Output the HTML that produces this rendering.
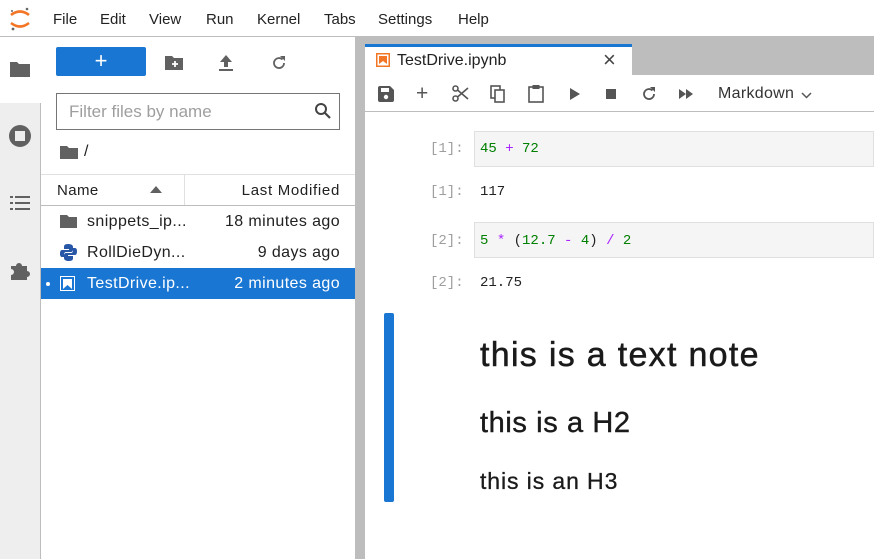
<!DOCTYPE html>
<html><head><meta charset="utf-8"><style>
*{box-sizing:border-box;margin:0;padding:0}
body{width:874px;height:559px;overflow:hidden;background:#fff;font-family:"Liberation Sans",sans-serif;color:#212121;position:relative;font-size:15px}
.a{position:absolute}
.mono{font-family:"Liberation Mono",monospace;font-size:14px}
.menu span{position:absolute;top:11px;font-size:15px;color:#222}
.ls{letter-spacing:0.4px}
</style></head><body>
<div class="a" style="left:0;top:0;width:874px;height:37px;border-bottom:1px solid #bdbdbd;background:#fff"></div>
<svg class="a" style="left:8px;top:6px" width="24" height="26" viewBox="0 0 24 26">
<path d="M3 9 Q12 2 21 9" stroke="#f37626" stroke-width="2.6" fill="none"/>
<path d="M3 17 Q12 24 21 17" stroke="#f37626" stroke-width="2.6" fill="none"/>
<circle cx="19" cy="3" r="1.3" fill="#666"/><circle cx="4" cy="5" r="1" fill="#666"/><circle cx="5" cy="23" r="1.4" fill="#666"/>
</svg>
<div class="menu">
<span style="left:53px">File</span><span style="left:100px">Edit</span><span style="left:149px">View</span><span style="left:206px">Run</span><span style="left:257px">Kernel</span><span style="left:324px">Tabs</span><span style="left:378px">Settings</span><span style="left:458px">Help</span>
</div>
<div class="a" style="left:0;top:37px;width:41px;height:522px;background:#eeeeee;border-right:1px solid #bdbdbd"></div>
<div class="a" style="left:0;top:37px;width:41px;height:66px;background:#fff"></div>
<svg class="a" style="left:9px;top:60px" width="22" height="18" viewBox="0 0 22 18"><path d="M1 2h7l2 2h11v13H1z" fill="#616161"/></svg>
<svg class="a" style="left:8px;top:124px" width="24" height="24"><circle cx="12" cy="12" r="11" fill="#616161"/><rect x="7" y="7" width="10" height="10" fill="#eee"/></svg>
<svg class="a" style="left:10px;top:195px" width="20" height="16"><g fill="#616161"><rect x="0" y="1" width="3" height="2"/><rect x="5" y="1" width="15" height="2"/><rect x="0" y="7" width="3" height="2"/><rect x="5" y="7" width="15" height="2"/><rect x="0" y="13" width="3" height="2"/><rect x="5" y="13" width="15" height="2"/></g></svg>
<svg class="a" style="left:9px;top:259px" width="22" height="22" viewBox="0 0 22 22"><path d="M2 7h5a3 3 0 1 1 6 0h5v5a3 3 0 1 1 0 6v3H2v-5a3 3 0 1 0 0-6z" fill="#616161"/></svg>
<div class="a" style="left:56px;top:47px;width:90px;height:29px;background:#1976d2;border-radius:2px;color:#fff;text-align:center;font-size:22px;line-height:28px">+</div>
<svg class="a" style="left:165px;top:55px" width="18" height="15" viewBox="0 0 18 15"><path d="M0 1h7l2 2h9v12H0z" fill="#616161"/><path d="M10 6v6M7 9h6" stroke="#fff" stroke-width="1.8"/></svg>
<svg class="a" style="left:219px;top:55px" width="14" height="16"><path d="M7 0L1 7h4v5h4V7h4z M0 14h14v2H0z" fill="#616161"/></svg>
<svg class="a" style="left:271px;top:55px" width="16" height="16" viewBox="0 0 16 16"><path d="M13 8a5 5 0 1 1-1.5-3.5" stroke="#616161" stroke-width="1.8" fill="none"/><path d="M9 1h5v5z" fill="#616161"/></svg>
<div class="a" style="left:56px;top:93px;width:284px;height:37px;border:1px solid #757575;color:#9e9e9e;font-size:17px;padding:8px 12px">Filter files by name</div>
<svg class="a" style="left:314px;top:102px" width="18" height="18"><circle cx="7" cy="7" r="5" stroke="#444" stroke-width="2" fill="none"/><path d="M11 11l5 5" stroke="#444" stroke-width="2.2"/></svg>
<svg class="a" style="left:60px;top:145px" width="18" height="14"><path d="M0 1h7l2 2h9v11H0z" fill="#616161"/></svg>
<div class="a" style="left:84px;top:143px;font-size:16px">/</div>
<div class="a" style="left:41px;top:174px;width:314px;height:32px;border-top:1px solid #e0e0e0;border-bottom:1px solid #bdbdbd"></div>
<div class="a" style="left:184px;top:175px;width:1px;height:30px;background:#e0e0e0"></div>
<div class="a ls" style="left:57px;top:182px;font-size:15px">Name</div>
<svg class="a" style="left:150px;top:186px" width="12" height="7"><path d="M0 7L6 0l6 7z" fill="#616161"/></svg>
<div class="a ls" style="right:534px;top:182px;font-size:15px;letter-spacing:0.7px">Last Modified</div>
<svg class="a" style="left:60px;top:214px" width="17" height="14"><path d="M0 1h7l2 2h8v11H0z" fill="#616161"/></svg>
<div class="a ls" style="left:87px;top:213px;font-size:16px">snippets_ip...</div>
<div class="a ls" style="right:534px;top:213px;font-size:16px">18 minutes ago</div>
<svg class="a" style="left:60px;top:244px" width="17" height="17" viewBox="0 0 17 17"><path d="M8 0C4 0 4 2 4 3v2h5v1H2C0 6 0 9 0 10c0 2 1 3 2 3h2v-3c0-1 1-2 2-2h5c1 0 2-1 2-2V3c0-2-2-3-5-3z" fill="#2856a6"/><path d="M9 17c4 0 4-2 4-3v-2H8v-1h7c2 0 2-3 2-4 0-2-1-3-2-3h-2v3c0 1-1 2-2 2H6c-1 0-2 1-2 2v3c0 2 2 3 5 3z" fill="#2856a6"/></svg>
<div class="a ls" style="left:87px;top:244px;font-size:16px">RollDieDyn...</div>
<div class="a ls" style="right:534px;top:244px;font-size:16px">9 days ago</div>
<div class="a" style="left:41px;top:268px;width:314px;height:31px;background:#1976d2"></div>
<div class="a" style="left:46px;top:282px;width:4px;height:4px;border-radius:2px;background:#fff"></div>
<div class="a" style="left:60px;top:276px;width:15px;height:15px;border:1.5px solid #fff"></div>
<svg class="a" style="left:63px;top:279px" width="9" height="10"><path d="M0 0h9v10L4.5 6 0 10z" fill="#fff"/></svg>
<div class="a ls" style="left:87px;top:275px;font-size:16px;color:#fff">TestDrive.ip...</div>
<div class="a ls" style="right:534px;top:275px;font-size:16px;color:#fff">2 minutes ago</div>
<div class="a" style="left:355px;top:37px;width:10px;height:522px;background:#bdbdbd"></div>
<div class="a" style="left:365px;top:37px;width:509px;height:38px;background:#bdbdbd"></div>
<div class="a" style="left:365px;top:44px;width:267px;height:32px;background:#fff;border-top:3px solid #1976d2"></div>
<svg class="a" style="left:376px;top:53px" width="14" height="14"><rect x="0.75" y="0.75" width="12.5" height="12.5" fill="none" stroke="#f37626" stroke-width="1.5"/><path d="M3 3h8v8L7 8 3 11z" fill="#f37626"/></svg>
<div class="a" style="left:397px;top:52px;font-size:16px">TestDrive.ipynb</div>
<div class="a" style="left:603px;top:47px;font-size:22px;color:#444">×</div>
<div class="a" style="left:365px;top:75px;width:509px;height:37px;background:#fff;border-bottom:1px solid #bdbdbd"></div>
<svg class="a" style="left:378px;top:86px" width="16" height="16"><path d="M0 2a2 2 0 0 1 2-2h10l4 4v10a2 2 0 0 1-2 2H2a2 2 0 0 1-2-2z" fill="#555"/><rect x="3" y="2" width="8" height="4" fill="#fff"/><circle cx="8" cy="11" r="2.2" fill="#fff"/></svg>
<div class="a" style="left:416px;top:82px;font-size:21px;color:#555">+</div>
<svg class="a" style="left:452px;top:85px" width="17" height="17" viewBox="0 0 17 17"><circle cx="3.5" cy="3.5" r="2.5" stroke="#555" stroke-width="1.6" fill="none"/><circle cx="3.5" cy="13.5" r="2.5" stroke="#555" stroke-width="1.6" fill="none"/><path d="M5.5 5L16 14M5.5 12L16 3" stroke="#555" stroke-width="1.6"/></svg>
<svg class="a" style="left:490px;top:85px" width="16" height="18"><rect x="1" y="1" width="9" height="12" fill="none" stroke="#555" stroke-width="1.6"/><rect x="5" y="5" width="9" height="12" fill="#fff" stroke="#555" stroke-width="1.6"/></svg>
<svg class="a" style="left:528px;top:84px" width="16" height="19"><rect x="1" y="3" width="14" height="15" fill="none" stroke="#555" stroke-width="1.6"/><rect x="4.5" y="1" width="7" height="4" fill="#555"/></svg>
<svg class="a" style="left:570px;top:88px" width="10" height="12"><path d="M0 0l10 6-10 6z" fill="#555"/></svg>
<div class="a" style="left:606px;top:89px;width:10px;height:10px;background:#555"></div>
<svg class="a" style="left:641px;top:86px" width="16" height="16" viewBox="0 0 16 16"><path d="M13 8a5 5 0 1 1-1.5-3.5" stroke="#555" stroke-width="1.8" fill="none"/><path d="M9 1h5v5z" fill="#555"/></svg>
<svg class="a" style="left:679px;top:89px" width="14" height="10"><path d="M0 0l7 5-7 5zM7 0l7 5-7 5z" fill="#555"/></svg>
<div class="a" style="left:718px;top:85px;font-size:16px;color:#333;letter-spacing:0.3px">Markdown</div>
<svg class="a" style="left:801px;top:92px" width="11" height="7"><path d="M1 1l4.5 4.5L10 1" stroke="#555" stroke-width="1.5" fill="none"/></svg>
<div class="a mono" style="left:430px;top:141px;color:#9e9e9e">[1]:</div>
<div class="a" style="left:474px;top:131px;width:400px;height:36px;background:#f5f5f5;border:1px solid #e0e0e0"></div>
<div class="a mono" style="left:480px;top:141px"><span style="color:#008000">45</span> <span style="color:#aa22ff">+</span> <span style="color:#008000">72</span></div>
<div class="a mono" style="left:430px;top:184px;color:#9e9e9e">[1]:</div>
<div class="a mono" style="left:480px;top:184px">117</div>
<div class="a mono" style="left:430px;top:233px;color:#9e9e9e">[2]:</div>
<div class="a" style="left:474px;top:222px;width:400px;height:36px;background:#f5f5f5;border:1px solid #e0e0e0"></div>
<div class="a mono" style="left:480px;top:233px"><span style="color:#008000">5</span> <span style="color:#aa22ff">*</span> (<span style="color:#008000">12.7</span> <span style="color:#aa22ff">-</span> <span style="color:#008000">4</span>) <span style="color:#aa22ff">/</span> <span style="color:#008000">2</span></div>
<div class="a mono" style="left:430px;top:275px;color:#9e9e9e">[2]:</div>
<div class="a mono" style="left:480px;top:275px">21.75</div>
<div class="a" style="left:384px;top:313px;width:10px;height:189px;background:#1976d2;border-radius:2px"></div>
<div class="a" style="left:480px;top:336px;font-size:34px;white-space:nowrap;letter-spacing:1.3px;color:#1a1a1a;-webkit-text-stroke:0.5px #1a1a1a">this is a text note</div>
<div class="a" style="left:480px;top:407px;font-size:29px;white-space:nowrap;letter-spacing:0.6px;color:#1a1a1a;-webkit-text-stroke:0.4px #1a1a1a">this is a H2</div>
<div class="a" style="left:480px;top:468px;font-size:23px;white-space:nowrap;letter-spacing:0.9px;color:#1a1a1a;-webkit-text-stroke:0.3px #1a1a1a">this is an H3</div>
</body></html>
